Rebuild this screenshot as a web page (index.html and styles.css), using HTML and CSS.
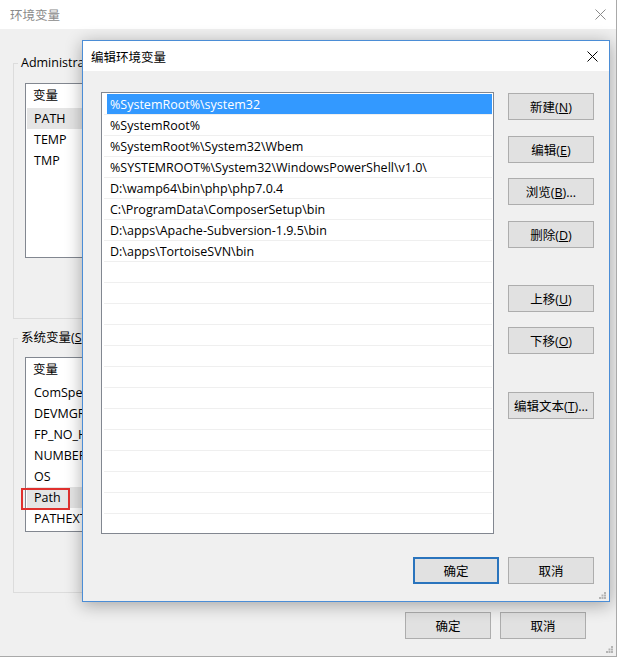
FILE: index.html
```html
<!DOCTYPE html>
<html lang="zh-CN">
<head>
<meta charset="utf-8">
<title>环境变量</title>
<link rel="stylesheet" href="styles.css">
</head>
<body>
<div class="win">
  <div class="win-title">
    <span>环境变量</span>
    <svg class="x-icon" width="11" height="11" viewBox="0 0 11 11"><path d="M0.5 0.5 L10.5 10.5 M10.5 0.5 L0.5 10.5" stroke="#8a8a8a" stroke-width="1" fill="none"/></svg>
  </div>
  <div class="win-body">
    <div class="group g1">
      <div class="group-label">Administra</div>
      <div class="vlist">
        <div class="vhead"><span class="c1">变量</span></div>
        <div class="vrow sel"><span class="c1">PATH</span></div>
        <div class="vrow"><span class="c1">TEMP</span></div>
        <div class="vrow"><span class="c1">TMP</span></div>
      </div>
    </div>
    <div class="group g2">
      <div class="group-label">系统变量(<u>S</u>)</div>
      <div class="vlist">
        <div class="vhead"><span class="c1">变量</span></div>
        <div class="vrow"><span class="c1">ComSpe</span></div>
        <div class="vrow"><span class="c1">DEVMGR</span></div>
        <div class="vrow"><span class="c1">FP_NO_H</span></div>
        <div class="vrow"><span class="c1">NUMBER</span></div>
        <div class="vrow"><span class="c1">OS</span></div>
        <div class="vrow sel"><span class="c1">Path</span></div>
        <div class="vrow"><span class="c1">PATHEXT</span></div>
      </div>
    </div>
    <div class="win-foot">
      <button class="btn">确定</button>
      <button class="btn">取消</button>
    </div>
  </div>
  <svg class="grip grip-win" width="7" height="7" viewBox="0 0 7 7"><g fill="#b4b4b4"><rect x="5" y="0" width="2" height="2"/><rect x="2.5" y="2.5" width="2" height="2"/><rect x="5" y="2.5" width="2" height="2"/><rect x="0" y="5" width="2" height="2"/><rect x="2.5" y="5" width="2" height="2"/><rect x="5" y="5" width="2" height="2"/></g></svg>
  <div class="annot"></div>

  <div class="dialog">
    <div class="dlg-title">
      <span>编辑环境变量</span>
      <svg class="x-icon" width="11" height="11" viewBox="0 0 11 11"><path d="M0.5 0.5 L10.5 10.5 M10.5 0.5 L0.5 10.5" stroke="#000" stroke-width="1" fill="none"/></svg>
    </div>
    <div class="dlg-body">
      <div class="plist">
        <div class="prow sel"><span class="ptxt">%SystemRoot%\system32</span></div>
        <div class="prow"><span class="ptxt">%SystemRoot%</span></div>
        <div class="prow"><span class="ptxt">%SystemRoot%\System32\Wbem</span></div>
        <div class="prow"><span class="ptxt">%SYSTEMROOT%\System32\WindowsPowerShell\v1.0\</span></div>
        <div class="prow"><span class="ptxt">D:\wamp64\bin\php\php7.0.4</span></div>
        <div class="prow"><span class="ptxt">C:\ProgramData\ComposerSetup\bin</span></div>
        <div class="prow"><span class="ptxt">D:\apps\Apache-Subversion-1.9.5\bin</span></div>
        <div class="prow"><span class="ptxt">D:\apps\TortoiseSVN\bin</span></div>
        <div class="prow"></div>
        <div class="prow"></div>
        <div class="prow"></div>
        <div class="prow"></div>
        <div class="prow"></div>
        <div class="prow"></div>
        <div class="prow"></div>
        <div class="prow"></div>
        <div class="prow"></div>
        <div class="prow"></div>
        <div class="prow"></div>
        <div class="prow"></div>
        <div class="prow"></div>
      </div>
      <div class="side">
        <button class="btn b-new">新建(<u>N</u>)</button>
        <button class="btn b-edit">编辑(<u>E</u>)</button>
        <button class="btn b-browse">浏览(<u>B</u>)...</button>
        <button class="btn b-del">删除(<u>D</u>)</button>
        <button class="btn b-up">上移(<u>U</u>)</button>
        <button class="btn b-down">下移(<u>O</u>)</button>
        <button class="btn b-text">编辑文本(<u>T</u>)...</button>
      </div>
    </div>
    <div class="dlg-foot">
      <button class="btn default">确定</button>
      <button class="btn">取消</button>
    </div>
    <svg class="grip grip-dlg" width="7" height="7" viewBox="0 0 7 7"><g fill="#b4b4b4"><rect x="5" y="0" width="2" height="2"/><rect x="2.5" y="2.5" width="2" height="2"/><rect x="5" y="2.5" width="2" height="2"/><rect x="0" y="5" width="2" height="2"/><rect x="2.5" y="5" width="2" height="2"/><rect x="5" y="5" width="2" height="2"/></g></svg>
  </div>
</div>
</body>
</html>
```
FILE: styles.css
```css
* { box-sizing: border-box; }
html, body { margin: 0; padding: 0; }
body {
  width: 618px;
  height: 657px;
  overflow: hidden;
  background: #ffffff;
  font-family: "Open Sans", "Noto Sans CJK SC", sans-serif;
  font-size: 12.5px;
  color: #000;
}
u { text-decoration: underline; text-underline-offset: 1px; }

.win {
  position: relative;
  width: 617px;
  height: 657px;
  background: #f0f0f0;
  border-right: 1px solid #a9a9a9;
  border-bottom: 1px solid #a9a9a9;
  overflow: hidden;
}
.win-title {
  height: 29px;
  background: #fff;
  display: flex;
  align-items: center;
  justify-content: space-between;
  padding: 0 10px 1px 10px;
  color: #8a8a8a;
}
.win-body {
  padding: 34px 12px 0 13px;
}
.group {
  border: 1px solid #dcdcdc;
  padding: 0 11px;
}
.g1 { height: 256px; }
.g2 { height: 255px; margin-top: 19px; }
.group-label {
  width: fit-content;
  line-height: 16px;
  height: 16px;
  margin: -9px 0 0 -7px;
  padding: 0 3px;
  background: #f0f0f0;
  white-space: nowrap;
}
.vlist {
  height: 175px;
  background: #fff;
  border: 1px solid #828790;
  overflow: hidden;
}
.g1 .vlist { margin-top: 12px; }
.g2 .vlist { margin-top: 11px; }
.vhead {
  height: 24px;
  line-height: 24px;
  padding-left: 7px;
  display: flex;
}
.vrow {
  height: 21px;
  line-height: 21px;
  padding-left: 7px;
  margin-left: 1px;
  display: flex;
  white-space: nowrap;
}
.vrow.sel { background: #e5e5e5; }
.c1 { width: 170px; flex: none; }

.win-foot {
  display: flex;
  justify-content: flex-end;
  gap: 9px;
  margin-top: 19px;
  padding-right: 18px;
}

.btn {
  width: 86px;
  height: 27px;
  padding: 0;
  background: #e1e1e1;
  border: 1px solid #adadad;
  font: inherit;
  color: #000;
  display: block;
  white-space: nowrap;
}
.btn.default {
  border: 2px solid #2a74bd;
}

.grip { position: absolute; }
.grip-win { right: 3px; bottom: 3px; }
.grip-dlg { right: 3px; bottom: 2px; }

.annot {
  position: absolute;
  left: 21px;
  top: 488px;
  width: 49px;
  height: 22px;
  border: 2px solid #e0312e;
}

.dialog {
  position: absolute;
  left: 82px;
  top: 40px;
  width: 528px;
  height: 562px;
  background: #f0f0f0;
  border: 1px solid #4b8dd6;
  box-shadow: 0 3px 16px rgba(0, 0, 0, 0.32);
}
.dlg-title {
  height: 30px;
  background: #fff;
  display: flex;
  align-items: center;
  justify-content: space-between;
  padding: 0 11px 0 8px;
}
.dlg-body {
  display: flex;
  padding: 21px 15px 0 18px;
  gap: 14px;
}
.plist {
  width: 393px;
  height: 442px;
  background: #fff;
  border: 1px solid #828790;
  padding: 1px 1px 0 2px;
  overflow: hidden;
}
.prow {
  height: 21px;
  border-bottom: 1px solid #efefef;
  padding-left: 3px;
  display: flex;
}
.ptxt {
  display: block;
  flex: 1;
  height: 20px;
  line-height: 20px;
  padding: 1px 0 0 3px;
  overflow: hidden;
  white-space: nowrap;
}
.prow.sel .ptxt {
  background: #3399ff;
  color: #fff;
}
.side {
  display: flex;
  flex-direction: column;
  padding-top: 1px;
}
.b-edit { margin-top: 16px; }
.b-browse { margin-top: 15px; }
.b-del { margin-top: 16px; }
.b-up { margin-top: 37px; }
.b-down { margin-top: 15px; }
.b-text { margin-top: 38px; }

.dlg-foot {
  display: flex;
  justify-content: flex-end;
  gap: 9px;
  padding: 23px 15px 0 0;
}
```
